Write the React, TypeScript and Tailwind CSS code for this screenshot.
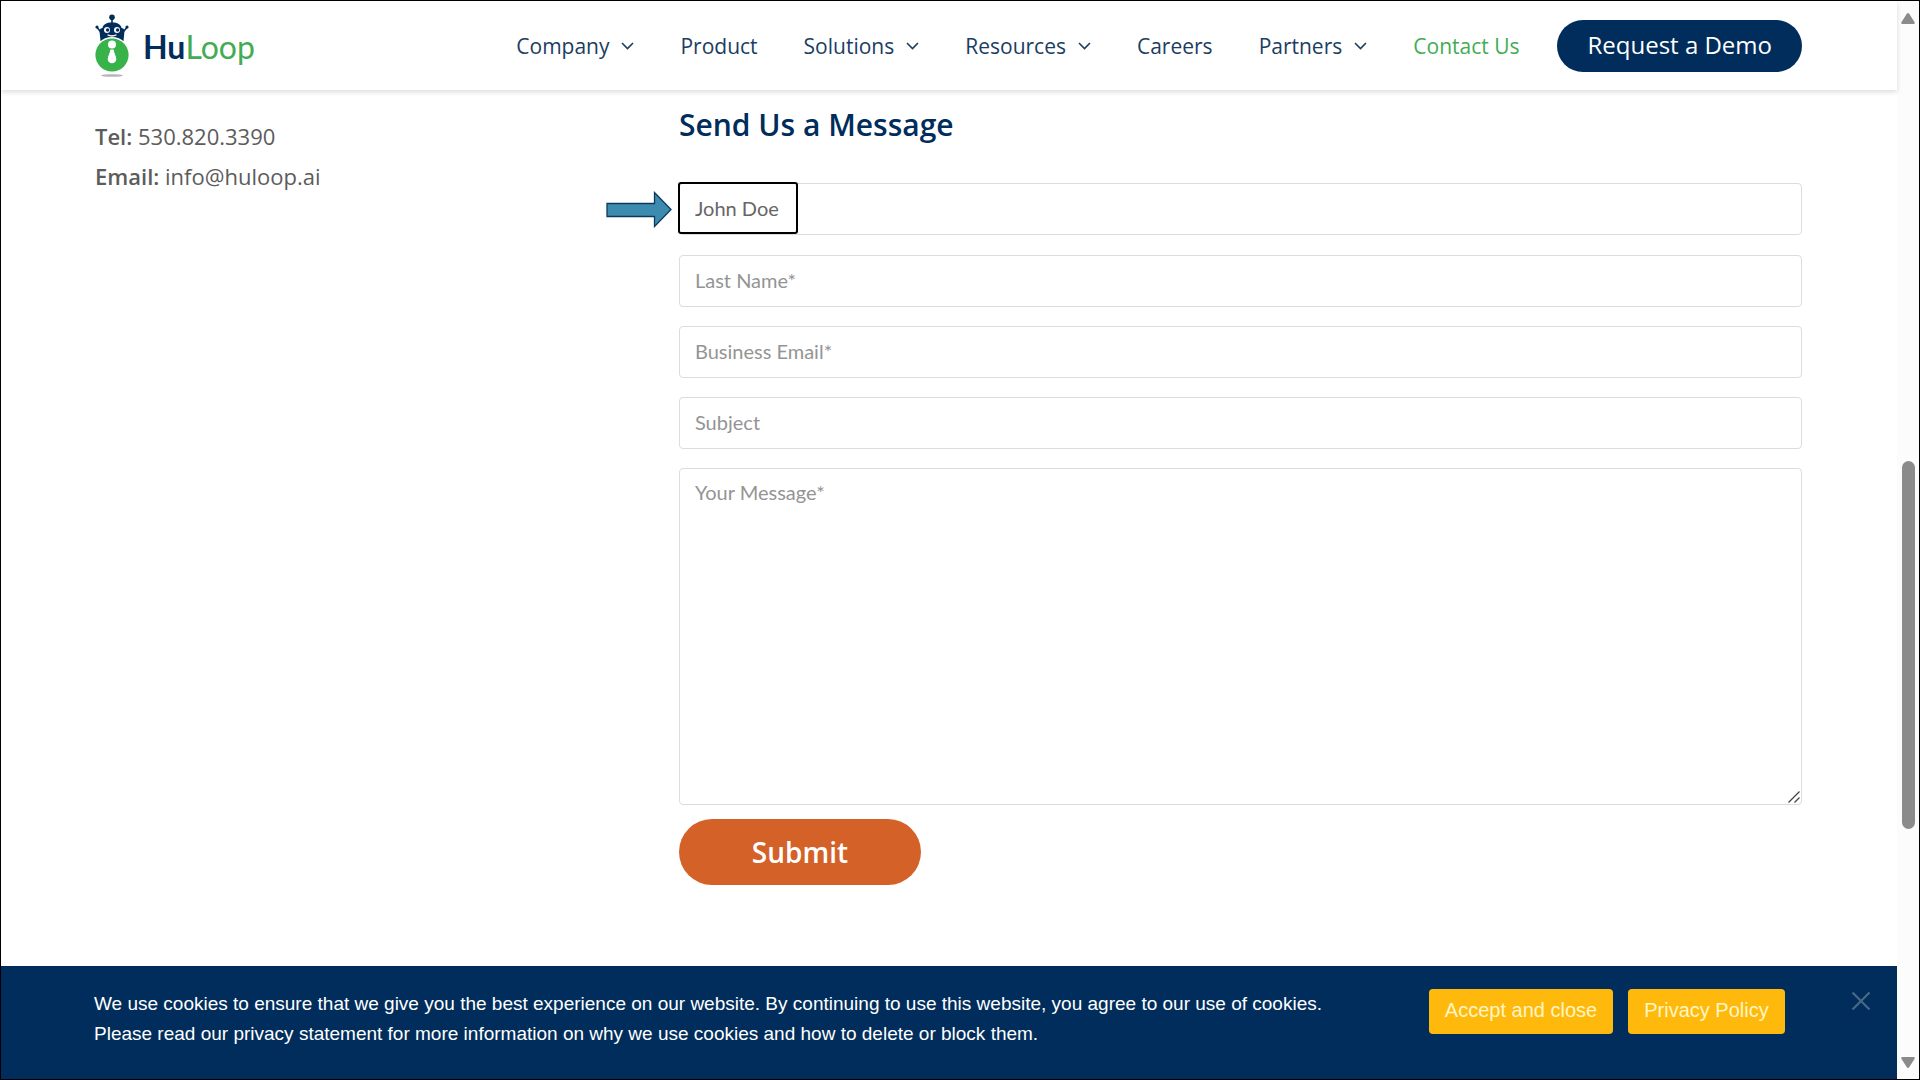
import { useState } from "react";

const links = [
  { text: "Company", menu: true },
  { text: "Product", menu: false },
  { text: "Solutions", menu: true },
  { text: "Resources", menu: true },
  { text: "Careers", menu: false },
  { text: "Partners", menu: true },
  { text: "Contact Us", menu: false, active: true },
];

const fieldClass =
  "block w-full rounded-[4px] border border-[#dcdcdc] bg-white px-[15px] font-['Lato',sans-serif] text-[20px] leading-[28px] text-[#666] placeholder:text-[#949494] outline-none";

function Logo() {
  return (
    <a href="#" aria-label="HuLoop" className="flex items-center gap-[14px]">
      <svg width="34" height="64" viewBox="0 0 34 64" aria-hidden="true">
        {/* robot head */}
        <circle cx="17" cy="3.2" r="2.8" fill="#002d5b" />
        <path d="M16.2 4h1.6v6h-1.6z" fill="#002d5b" />
        <circle cx="2" cy="13" r="1.6" fill="#002d5b" />
        <circle cx="32" cy="13" r="1.6" fill="#002d5b" />
        <path
          d="M2 13.5l3.5 4M32 13.5l-3.5 4"
          stroke="#002d5b"
          strokeWidth="1.6"
        />
        <path
          d="M7.5 14C8 10.5 11.5 8.5 17 8.5S26 10.5 26.500 14c2.800.3 3.300 2.500 2.800 5l-.8 8H5.500l-.8-8c-.5-2.500 0-4.700 2.800-5z"
          fill="#002d5b"
        />
        <circle cx="12" cy="16" r="3" fill="#fff" />
        <circle cx="22" cy="16" r="3" fill="#fff" />
        <circle cx="12.6" cy="16" r="1.7" fill="#002d5b" />
        <circle cx="22.6" cy="16" r="1.7" fill="#002d5b" />
        <path d="M12.5 20.8q4.500 2.400 9 0" fill="none" stroke="#fff" strokeWidth="1.3" />
        {/* body */}
        <circle cx="17" cy="41" r="18" fill="#fff" />
        <circle cx="17" cy="41" r="16.6" fill="#37b34a" />
        <circle cx="17" cy="30.5" r="4" fill="#fff" />
        <path d="M15.300 35.500h3.400c.3 4 2.600 6.500 2.600 9.500a4.300 4.300 0 0 1-8.600 0c0-3 2.300-5.500 2.600-9.500z" fill="#fff" />
        <ellipse cx="17" cy="61.5" rx="11" ry="1.3" fill="#b5b5b5" />
      </svg>
      <span className="pt-[3px] font-['Lato',sans-serif] text-[32px] leading-[40px] text-[#43ac53]">
        <b className="font-bold text-[#002d5b]">Hu</b>Loop
      </span>
    </a>
  );
}

function Header() {
  return (
    <header className="relative flex h-[89px] items-center justify-between bg-white pl-[94px] pr-[95px] shadow-[0_2px_5px_rgba(0,0,0,0.14)]">
      <Logo />
      <div className="flex items-center gap-[38px]">
        <nav className="flex items-center gap-[46px] text-[21px] leading-[30px] text-[#1b3d62]">
          {links.map((link) => (
            <a
              key={link.text}
              href="#"
              className={link.active ? "text-[#43ac53]" : "flex items-center gap-3"}
            >
              {link.text}
              {link.menu && (
                <svg width="13" height="8" viewBox="0 0 13 8" fill="none" stroke="currentColor" strokeWidth="1.6" aria-hidden="true">
                  <path d="M1 1l5.500 5.500L12 1" />
                </svg>
              )}
            </a>
          ))}
        </nav>
        <a
          href="#"
          className="flex h-[52px] items-center rounded-full bg-[#002d5b] px-[30px] pb-[2px] text-[24px] leading-[30px] text-white"
        >
          Request a Demo
        </a>
      </div>
    </header>
  );
}

function ContactForm() {
  const [name, setName] = useState("John Doe");

  return (
    <form className="pt-[17px]" onSubmit={(e) => e.preventDefault()}>
      <h2 className="mb-10 text-[30px] font-semibold leading-[36px] text-[#002d5b]">
        Send Us a Message
      </h2>
      <div className="flex flex-col gap-[19px]">
        <div className="relative pb-px">
          <input
            type="text"
            aria-label="First Name"
            value={name}
            onChange={(e) => setName(e.target.value)}
            className={`${fieldClass} h-[52px] pb-[2px]`}
          />
          {/* highlight around the typed name, with the pointer arrow */}
          <span className="pointer-events-none absolute -left-px -top-px h-[52px] w-[120px] rounded-[3px] border-2 border-black" />
          <svg
            className="absolute -left-[73px] top-2"
            width="67"
            height="37"
            viewBox="0 0 67 37"
            aria-hidden="true"
          >
            <path
              d="M1 12.500h47.500V1.500L65 18.500 48.500 35.500v-10H1z"
              fill="#3e8bb0"
              stroke="#0c3a5c"
              strokeWidth="1.3"
            />
          </svg>
        </div>
        <input type="text" aria-label="Last Name" placeholder="Last Name*" className={`${fieldClass} h-[52px] pb-[2px]`} />
        <input type="email" aria-label="Business Email" placeholder="Business Email*" className={`${fieldClass} h-[52px] pb-[2px]`} />
        <input type="text" aria-label="Subject" placeholder="Subject" className={`${fieldClass} h-[52px] pb-[2px]`} />
        <div className="relative">
          <textarea
            aria-label="Your Message"
            placeholder="Your Message*"
            className={`${fieldClass} h-[337px] resize-none py-[9px]`}
          />
          {/* resize grip */}
          <svg
            className="pointer-events-none absolute bottom-[2px] right-[2px]"
            width="12"
            height="12"
            viewBox="0 0 12 12"
            stroke="#444"
            strokeWidth="1.3"
            aria-hidden="true"
          >
            <path d="M.5 11.500l11-11M6.500 11.500l5-5" />
          </svg>
        </div>
      </div>
      <button
        type="submit"
        className="mt-[14px] h-[66px] w-[242px] cursor-pointer rounded-full bg-[#d46128] text-[28px] font-semibold leading-[36px] text-white"
      >
        Submit
      </button>
    </form>
  );
}

function CookieBar() {
  return (
    <div className="flex h-[113px] items-start bg-[#002d5b] pl-[93px] pr-[26px] pt-[23px] font-['Liberation_Sans',sans-serif]">
      <p className="flex-1 pr-[70px] text-[19px] leading-[30px] text-white">
        We use cookies to ensure that we give you the best experience on our
        website. By continuing to use this website, you agree to our use of
        cookies. Please read our privacy statement for more information on why
        we use cookies and how to delete or block them.
      </p>
      <div className="flex gap-[15px] text-[20px] leading-[30px] text-[#fff6c4]">
        <button type="button" className="h-[45px] w-[184px] cursor-pointer rounded-[4px] bg-[#ffb90d] pb-[3px]">
          Accept and close
        </button>
        <button type="button" className="h-[45px] w-[157px] cursor-pointer rounded-[4px] bg-[#ffb90d] pb-[3px]">
          Privacy Policy
        </button>
      </div>
      <button type="button" aria-label="Close" className="ml-[66px] mt-[2px] cursor-pointer text-[#4a6885]">
        <svg width="20" height="20" viewBox="0 0 20 20" stroke="currentColor" strokeWidth="2.2" aria-hidden="true">
          <path d="M1.500 1.500l17 17M18.500 1.500l-17 17" />
        </svg>
      </button>
    </div>
  );
}

function ScrollTrack() {
  return (
    <div className="flex w-[22px] shrink-0 flex-col items-center bg-[#fcfcfc] pb-[11px] pt-3" aria-hidden="true">
      <svg width="14" height="11" viewBox="0 0 14 11" fill="#8b8b8b">
        <path d="M7 0q.8 0 1.200.7l5.400 8.600q.6 1.700-1 1.700H1.400q-1.600 0-1-1.700L5.800.7Q6.200 0 7 0z" />
      </svg>
      <div className="flex-[437]" />
      <div className="w-[13px] flex-[369] rounded-full bg-[#8b8b8b]" />
      <div className="flex-[228]" />
      <svg width="14" height="11" viewBox="0 0 14 11" fill="#8b8b8b">
        <path d="M7 11q.8 0 1.200-.7l5.400-8.600Q14.200 0 12.600 0H1.400Q-.2 0 .4 1.700l5.400 8.600q.4.700 1.200.7z" />
      </svg>
    </div>
  );
}

export default function App() {
  return (
    <div className="flex min-h-screen border border-black bg-white font-['Open_Sans',sans-serif]">
      <div className="flex min-w-0 flex-1 flex-col">
        <Header />
        <main className="grid flex-1 grid-cols-[26fr_50fr] pl-[94px] pr-[95px]">
          <address className="pt-[26px] text-[22px] not-italic leading-[40px] text-[#5c5c5c]">
            <p>
              <b className="font-semibold">Tel:</b> <a href="tel:5308203390">530.820.3390</a>
            </p>
            <p>
              <b className="font-semibold">Email:</b> <a href="mailto:info@huloop.ai">info@huloop.ai</a>
            </p>
          </address>
          <ContactForm />
        </main>
        <CookieBar />
      </div>
      <ScrollTrack />
    </div>
  );
}
